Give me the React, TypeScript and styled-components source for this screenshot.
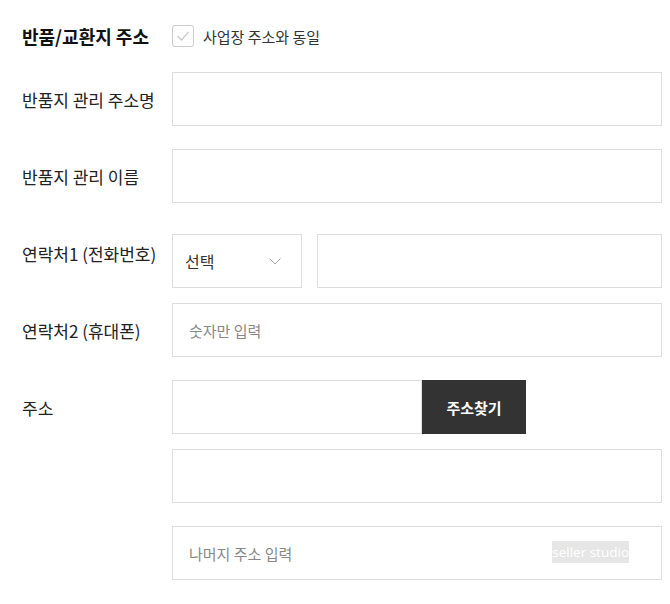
import React from 'react'
import styled, { createGlobalStyle } from 'styled-components'

const GlobalStyle = createGlobalStyle`
  body {
    margin: 0;
    background: #fff;
    font-family: "Noto Sans CJK KR", "Noto Sans", sans-serif;
    color: #222;
  }
`

const Form = styled.div`
  padding: 25px 0 0 22px;
  width: 640px;
`

const HeadRow = styled.div`
  display: flex;
  align-items: center;
  height: 22px;
`

const Heading = styled.h2`
  margin: 0;
  width: 150px;
  font-size: 18px;
  font-weight: 700;
  color: #111;
  line-height: 22px;
`

const CheckLabel = styled.label`
  display: flex;
  align-items: center;
  gap: 9px;
  font-size: 15px;
  color: #333;
`

const CheckBox = styled.span`
  width: 20px;
  height: 20px;
  border: 1px solid #ccc;
  border-radius: 3px;
  display: flex;
  align-items: center;
  justify-content: center;
`

const Row = styled.div<{ $top: number }>`
  display: grid;
  grid-template-columns: 150px 490px;
  align-items: start;
  margin-top: ${(p) => p.$top}px;
`

const Label = styled.div<{ $offset?: number }>`
  font-size: 17px;
  line-height: 22px;
  height: 22px;
  color: #222;
  white-space: nowrap;
  padding-top: ${(p) => p.$offset ?? 17}px;
`

const Field = styled.div`
  display: flex;
  flex-direction: column;
`

const Line = styled.div<{ $gap?: number; $top?: number }>`
  display: flex;
  gap: ${(p) => p.$gap ?? 0}px;
  margin-top: ${(p) => p.$top ?? 0}px;
`

const Input = styled.div<{ $w?: number }>`
  position: relative;
  box-sizing: border-box;
  width: ${(p) => (p.$w ? `${p.$w}px` : '100%')};
  height: 54px;
  border: 1px solid #ddd;
  background: #fff;
  display: flex;
  align-items: center;
  padding: 0 16px;
  font-size: 15px;
  color: #888;
`

const Select = styled.div`
  box-sizing: border-box;
  width: 130px;
  height: 54px;
  border: 1px solid #ddd;
  display: flex;
  align-items: center;
  justify-content: space-between;
  padding: 0 20px 0 12px;
  font-size: 16px;
  color: #333;
`

const DarkButton = styled.button`
  width: 104px;
  height: 54px;
  border: 0;
  background: #333;
  color: #fff;
  font-family: inherit;
  font-size: 15px;
  font-weight: 700;
`

const Watermark = styled.span`
  position: absolute;
  right: 32px;
  top: 14px;
  background: #e6e6e6;
  color: #fff;
  font-size: 13.5px;
  line-height: 22px;
  font-family: "Open Sans", sans-serif;
`

export default function App() {
  return (
    <>
      <GlobalStyle />
      <Form>
        <HeadRow>
          <Heading>반품/교환지 주소</Heading>
          <CheckLabel>
            <CheckBox>
              <svg width="14" height="12" viewBox="0 0 14 12">
                <path d="M1.5 6 L5.5 10 L12.5 2" fill="none" stroke="#c8c8c8" strokeWidth="1.2" />
              </svg>
            </CheckBox>
            사업장 주소와 동일
          </CheckLabel>
        </HeadRow>

        <Row $top={25}>
          <Label>반품지 관리 주소명</Label>
          <Input />
        </Row>

        <Row $top={23}>
          <Label>반품지 관리 이름</Label>
          <Input />
        </Row>

        <Row $top={23}>
          <Label>연락처1 (전화번호)</Label>
          <Line $gap={15} $top={8}>
            <Select>
              선택
              <svg width="12" height="7" viewBox="0 0 12 7">
                <path d="M0.5 0.5 L6 6 L11.5 0.5" fill="none" stroke="#aaa" strokeWidth="1" />
              </svg>
            </Select>
            <Input $w={345} />
          </Line>
        </Row>

        <Row $top={15}>
          <Label>연락처2 (휴대폰)</Label>
          <Input>숫자만 입력</Input>
        </Row>

        <Row $top={23}>
          <Label>주소</Label>
          <Field>
            <Line>
              <Input $w={250} />
              <DarkButton>주소찾기</DarkButton>
            </Line>
            <Line $top={15}>
              <Input />
            </Line>
            <Line $top={23}>
              <Input>
                나머지 주소 입력
                <Watermark>seller studio</Watermark>
              </Input>
            </Line>
          </Field>
        </Row>
      </Form>
    </>
  )
}
